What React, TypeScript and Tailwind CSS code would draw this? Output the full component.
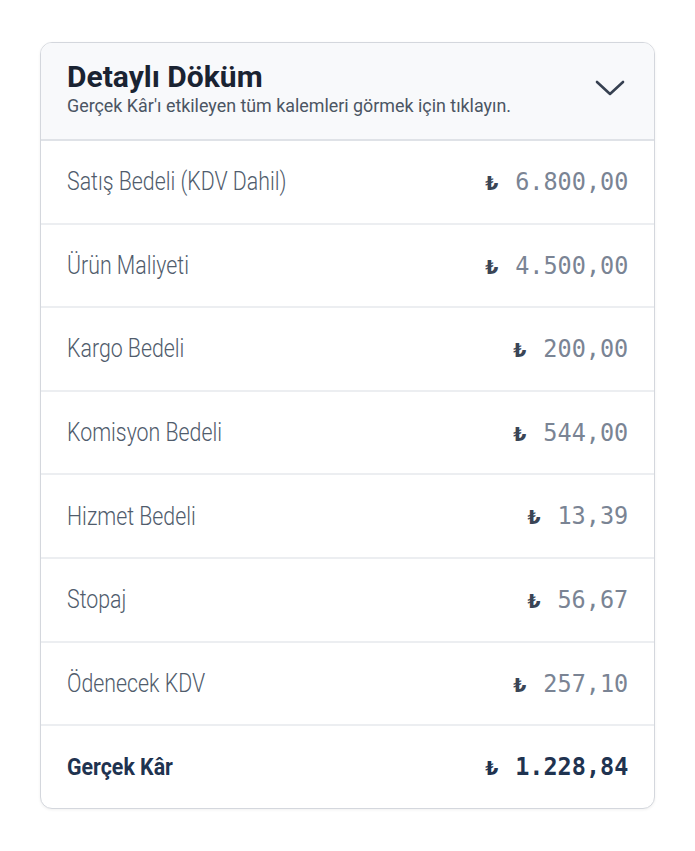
import React from "react";

const rows = [
  { label: "Satış Bedeli (KDV Dahil)", value: "6.800,00" },
  { label: "Ürün Maliyeti", value: "4.500,00" },
  { label: "Kargo Bedeli", value: "200,00" },
  { label: "Komisyon Bedeli", value: "544,00" },
  { label: "Hizmet Bedeli", value: "13,39" },
  { label: "Stopaj", value: "56,67" },
  { label: "Ödenecek KDV", value: "257,10" },
];

export default function App() {
  return (
    <div className="min-h-[851px] w-[695px] bg-white pt-[42px] px-[40px]" style={{ fontFamily: "Roboto, 'Noto Sans', sans-serif" }}>
      <div className="w-[615px] rounded-[12px] border border-[#d4d7dd] overflow-hidden bg-white shadow-[0_1px_3px_rgba(0,0,0,0.06)]">
        <div className="h-[98px] bg-[#f8f9fb] border-b-2 border-[#dfe2e7] flex items-center justify-between pl-[26px] pr-[28px]">
          <div className="flex flex-col mt-[-4px]">
            <span className="inline-block text-[30px] leading-[33px] font-bold text-[#1a2332] whitespace-nowrap">Detaylı Döküm</span>
            <span className="inline-block origin-left scale-x-[0.94] text-[19px] leading-[24px] text-[#4b5563] whitespace-nowrap mt-[1px]">Gerçek Kâr'ı etkileyen tüm kalemleri görmek için tıklayın.</span>
          </div>
          <svg width="32" height="20" viewBox="0 0 32 20" fill="none" className="mt-[-6px]">
            <path d="M3 4 L16 16 L29 4" stroke="#374151" strokeWidth="2.6" strokeLinecap="round" strokeLinejoin="round" />
          </svg>
        </div>
        {rows.map((r) => (
          <div key={r.label} className="h-[83.6px] border-b-2 border-[#eceef1] flex items-center justify-between pl-[26px] pr-[26px]">
            <span className="inline-block origin-left scale-x-[0.82] text-[26px] font-light text-[#505c6c] whitespace-nowrap">{r.label}</span>
            <span className="inline-block origin-right scale-x-[0.94] whitespace-nowrap flex items-center" style={{ fontFamily: "'DejaVu Sans Mono', monospace" }}>
              <span className="text-[20px] font-bold text-[#3a4556] mr-[18px]" style={{ fontFamily: "'DejaVu Sans', sans-serif" }}>₺</span>
              <span className="text-[25px] text-[#7a8494]">{r.value}</span>
            </span>
          </div>
        ))}
        <div className="h-[82px] flex items-center justify-between pl-[26px] pr-[26px]">
          <span className="inline-block origin-left scale-x-[0.89] text-[24px] font-bold text-[#1f3350] whitespace-nowrap">Gerçek Kâr</span>
          <span className="inline-block origin-right scale-x-[0.94] whitespace-nowrap flex items-center" style={{ fontFamily: "'DejaVu Sans Mono', monospace" }}>
            <span className="text-[20px] font-bold text-[#1f3350] mr-[18px]" style={{ fontFamily: "'DejaVu Sans', sans-serif" }}>₺</span>
            <span className="text-[25px] font-bold text-[#1f3350]">1.228,84</span>
          </span>
        </div>
      </div>
    </div>
  );
}
